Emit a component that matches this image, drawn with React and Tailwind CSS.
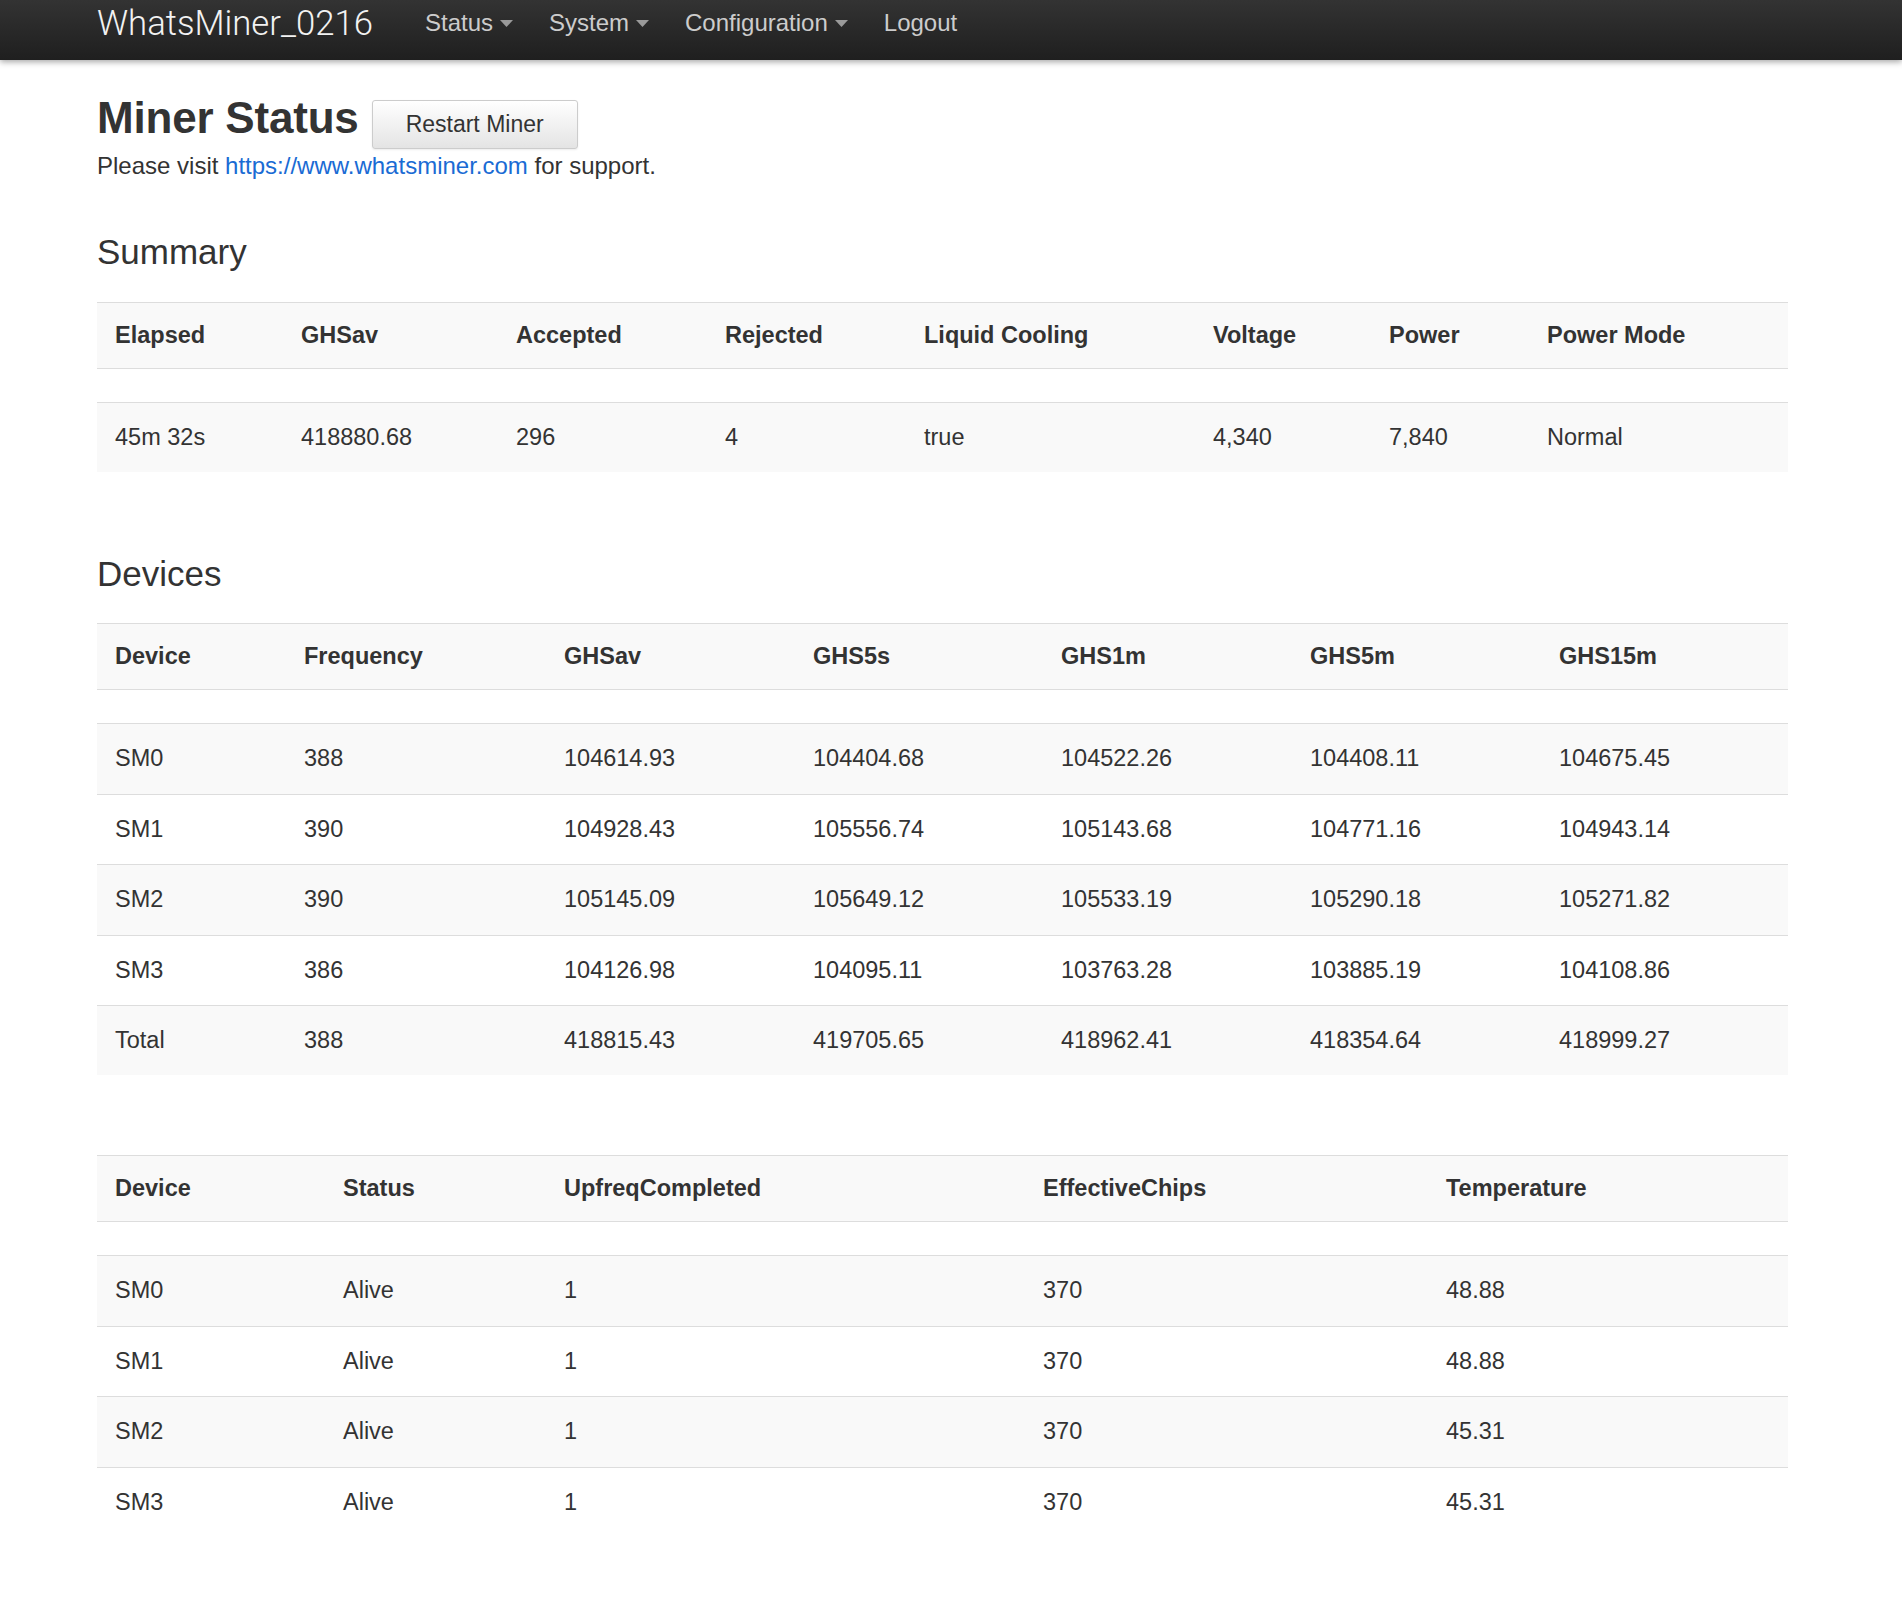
import React from "react";

function Caret() {
  return (
    <svg width="13" height="7" viewBox="0 0 13 7" className="ml-[7px]">
      <path d="M0 0 L13 0 L6.5 7 Z" fill="#9a9a9a" />
    </svg>
  );
}

function NavItem({ label, caret }) {
  return (
    <div className="flex items-center text-[24px] leading-[44px] text-[#cccccc]">
      <span>{label}</span>
      {caret && <Caret />}
    </div>
  );
}

function Row({ cols, cells, striped, header, h }) {
  return (
    <div
      className={`grid ${cols} items-center border-t border-[#dddddd] ${striped ? "bg-[#f9f9f9]" : "bg-white"} ${h}`}
    >
      {cells.map((c, i) => (
        <div key={i} className={`pl-[18px] whitespace-nowrap ${header ? "font-bold" : ""}`}>
          {c}
        </div>
      ))}
    </div>
  );
}

function DataTable({ cols, head, rows }) {
  return (
    <div className="text-[23.5px] text-[#333333]">
      <Row cols={cols} cells={head} striped header h="h-[66px]" />
      <Row cols={cols} cells={head.map(() => "")} h="h-[34px]" />
      {rows.map((r, i) => (
        <Row key={i} cols={cols} cells={r} striped={i % 2 === 0} h="h-[70.4px]" />
      ))}
    </div>
  );
}

export default function App() {
  const summaryCols =
    "grid-cols-[186px_215px_209px_199px_289px_176px_158px_1fr]";
  const devCols = "grid-cols-[189px_260px_249px_248px_249px_249px_1fr]";
  const statCols = "grid-cols-[228px_221px_479px_403px_1fr]";

  return (
    <div className="min-h-[1612px] bg-white font-['Liberation_Sans',Arial,sans-serif] text-[#333333]">
      <nav className="h-[60px] bg-gradient-to-b from-[#333333] to-[#1f1f1f] shadow-[0_2px_6px_rgba(0,0,0,0.35)] flex items-start pl-[97px] pt-[1px]">
        <div className="text-[34.7px] leading-[44px] text-[#f2f2f2] font-['Roboto',sans-serif] font-light">
          WhatsMiner_0216
        </div>
        <div className="flex items-start gap-[36px] ml-[52px]">
          <NavItem label="Status" caret />
          <NavItem label="System" caret />
          <NavItem label="Configuration" caret />
          <NavItem label="Logout" />
        </div>
      </nav>

      <main className="pl-[97px] pr-[114px]">
        <div className="flex items-start mt-[34px]">
          <h1 className="text-[44px] leading-[48px] font-bold tracking-[-0.2px]">
            Miner Status
          </h1>
          <button className="ml-[13px] mt-[6px] h-[49px] w-[206px] border border-[#cccccc] rounded-[3px] bg-gradient-to-b from-white to-[#e4e4e4] text-[23px] text-[#333333] shadow-[0_1px_2px_rgba(0,0,0,0.08)]">
            Restart Miner
          </button>
        </div>
        <p className="text-[24px] leading-[34px]">
          Please visit{" "}
          <a className="text-[#1a6bd4]">https://www.whatsminer.com</a> for
          support.
        </p>

        <h2 className="mt-[49px] text-[35px] leading-[40px]">Summary</h2>
        <div className="mt-[30px]">
          <DataTable
            cols={summaryCols}
            head={[
              "Elapsed",
              "GHSav",
              "Accepted",
              "Rejected",
              "Liquid Cooling",
              "Voltage",
              "Power",
              "Power Mode",
            ]}
            rows={[
              ["45m 32s", "418880.68", "296", "4", "true", "4,340", "7,840", "Normal"],
            ]}
          />
        </div>

        <h2 className="mt-[82px] text-[35px] leading-[40px]">Devices</h2>
        <div className="mt-[29px]">
          <DataTable
            cols={devCols}
            head={["Device", "Frequency", "GHSav", "GHS5s", "GHS1m", "GHS5m", "GHS15m"]}
            rows={[
              ["SM0", "388", "104614.93", "104404.68", "104522.26", "104408.11", "104675.45"],
              ["SM1", "390", "104928.43", "105556.74", "105143.68", "104771.16", "104943.14"],
              ["SM2", "390", "105145.09", "105649.12", "105533.19", "105290.18", "105271.82"],
              ["SM3", "386", "104126.98", "104095.11", "103763.28", "103885.19", "104108.86"],
              ["Total", "388", "418815.43", "419705.65", "418962.41", "418354.64", "418999.27"],
            ]}
          />
        </div>

        <div className="mt-[80px]">
          <DataTable
            cols={statCols}
            head={["Device", "Status", "UpfreqCompleted", "EffectiveChips", "Temperature"]}
            rows={[
              ["SM0", "Alive", "1", "370", "48.88"],
              ["SM1", "Alive", "1", "370", "48.88"],
              ["SM2", "Alive", "1", "370", "45.31"],
              ["SM3", "Alive", "1", "370", "45.31"],
            ]}
          />
        </div>
      </main>
    </div>
  );
}
